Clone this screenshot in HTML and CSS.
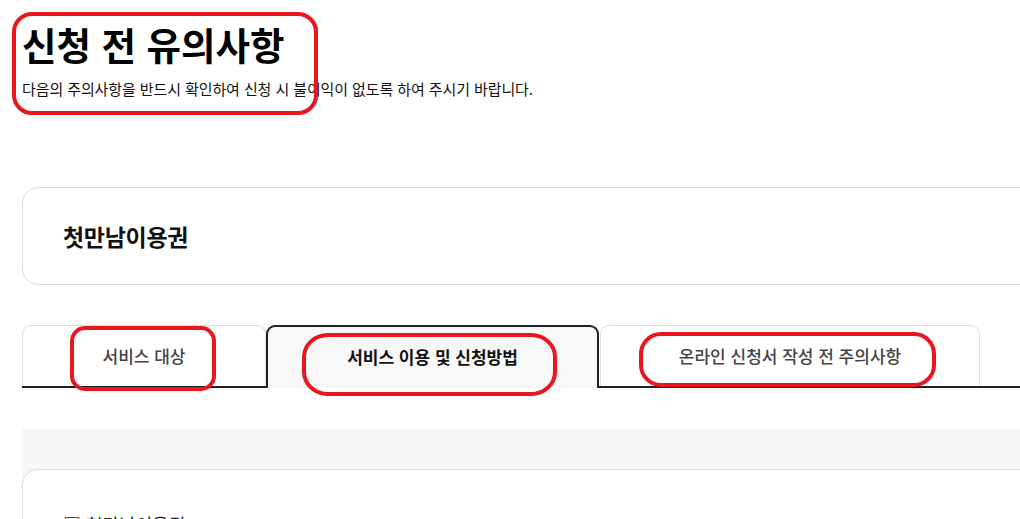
FILE: index.html
```html
<!DOCTYPE html>
<html lang="ko">
<head>
<meta charset="utf-8">
<title>신청 전 유의사항</title>
<link rel="stylesheet" href="styles.css">
</head>
<body>
<main class="page">
  <header class="intro">
    <h1 class="title">신청 전 유의사항</h1>
    <p class="desc">다음의 주의사항을 반드시 확인하여 신청 시 불이익이 없도록 하여 주시기 바랍니다.</p>
    <span class="mark mark-title"></span>
  </header>

  <section class="summary">
    <h2 class="summary-name">첫만남이용권</h2>
  </section>

  <nav class="tabs">
    <button class="tab tab-1">서비스 대상<span class="mark mark-tab1"></span></button>
    <button class="tab tab-2 active">서비스 이용 및 신청방법<span class="mark mark-tab2"></span></button>
    <button class="tab tab-3">온라인 신청서 작성 전 주의사항<span class="mark mark-tab3"></span></button>
  </nav>

  <section class="panel">
    <div class="panel-card">
      <h3 class="panel-head">□ 첫만남이용권</h3>
    </div>
  </section>
</main>
</body>
</html>
```

FILE: styles.css
```css
html, body {
  margin: 0;
  padding: 0;
  overflow: hidden;
  background: #fff;
}

body {
  font-family: "Noto Sans CJK KR", "Noto Sans", sans-serif;
  color: #111;
}

.page {
  width: 1240px;
  padding: 0 0 0 22px;
}

.intro {
  position: relative;
  padding-top: 21px;
}

.title {
  margin: 0;
  font-size: 37.5px;
  line-height: 46px;
  font-weight: 700;
  letter-spacing: 0;
  color: #000;
}

.desc {
  margin: 12px 0 0;
  font-size: 15px;
  line-height: 20px;
  letter-spacing: -0.1px;
  color: #111;
}

.summary {
  margin-top: 88px;
  height: 96px;
  border: 1px solid #dedede;
  border-radius: 16px;
  display: flex;
  align-items: center;
  padding-left: 40px;
}

.summary-name {
  margin: 0;
  font-size: 23px;
  line-height: 30px;
  font-weight: 700;
  letter-spacing: -0.3px;
  color: #111;
}

.tabs {
  margin-top: 40px;
  display: flex;
  align-items: flex-end;
  border-bottom: 2px solid #222;
  height: 61px;
}

.tab {
  position: relative;
  font-family: inherit;
  font-size: 17px;
  line-height: 22px;
  letter-spacing: 0;
  color: #444;
  font-weight: 500;
  background: #fff;
  border: 1px solid #dedede;
  border-bottom: 0;
  border-radius: 9px 9px 0 0;
  height: 61px;
  padding: 0;
  box-sizing: border-box;
  cursor: pointer;
}

.tab-1 { width: 244px; }
.tab-2 { width: 333px; }
.tab-3 { width: 380px; margin-left: 1px; }

.tab.active {
  background: #f8f8f8;
  border: 2px solid #222;
  border-bottom: 0;
  height: 63px;
  margin-bottom: -2px;
  color: #111;
  font-weight: 700;
  padding: 0 0 2px;
}

.panel {
  margin-top: 41px;
  background: #f7f7f7;
  padding-top: 40px;
  height: 300px;
}

.panel-card {
  background: #fff;
  border: 1px solid #dedede;
  border-radius: 16px;
  height: 300px;
  padding: 41px 40px 0;
}

.panel-head {
  margin: 0;
  font-size: 18px;
  line-height: 26px;
  font-weight: 400;
  color: #222;
}

/* red annotation outlines drawn over the screenshot */
.mark {
  position: absolute;
  border: 4px solid #e8161f;
  box-sizing: border-box;
  pointer-events: none;
}

.mark-title {
  left: -10px;
  top: 12px;
  width: 306px;
  height: 103px;
  border-radius: 20px;
}

.mark-tab1 {
  left: 47px;
  top: 0;
  width: 146px;
  height: 65px;
  border-radius: 15px;
}

.mark-tab2 {
  left: 34px;
  top: 6px;
  width: 255px;
  height: 63px;
  border-radius: 26px / 24px;
}

.mark-tab3 {
  left: 38px;
  top: 6px;
  width: 297px;
  height: 55px;
  border-radius: 22px;
}
```
